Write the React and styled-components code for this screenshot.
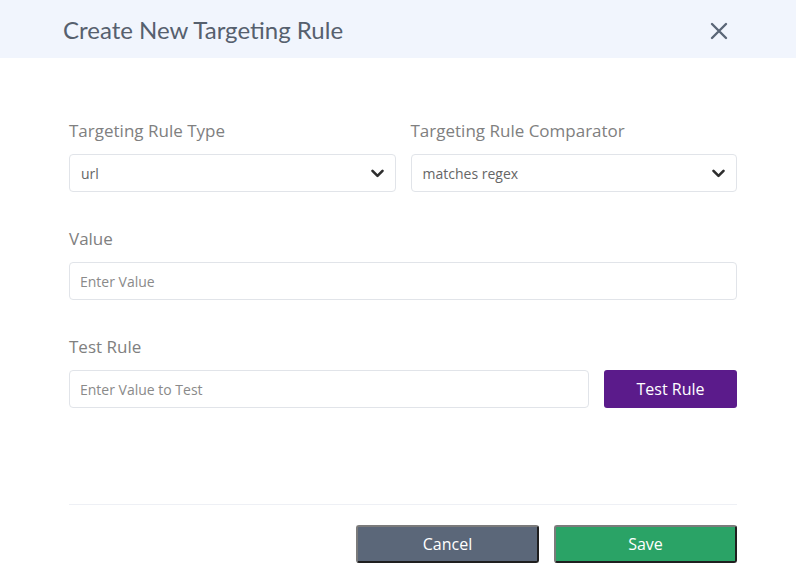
import styled, { createGlobalStyle } from "styled-components";

const GlobalStyle = createGlobalStyle`
  html, body {
    margin: 0;
    padding: 0;
    background: #ffffff;
  }
  * {
    box-sizing: border-box;
  }
`;

const Chevron = () => (
  <svg width="13" height="9" viewBox="0 0 13 9">
    <path
      d="M1.5 1.8 L6.5 6.8 L11.5 1.8"
      fill="none"
      stroke="#2e2e2e"
      strokeWidth="2.6"
      strokeLinecap="round"
      strokeLinejoin="round"
    />
  </svg>
);

const CloseIcon = () => (
  <svg width="20" height="20" viewBox="0 0 20 20">
    <path
      d="M3 3 L17 17 M17 3 L3 17"
      stroke="#5b6677"
      strokeWidth="2.4"
      strokeLinecap="round"
    />
  </svg>
);

const App = () => {
  return (
    <Modal>
      <GlobalStyle />
      <Header>
        <Title>Create New Targeting Rule</Title>
        <CloseButton aria-label="Close">
          <CloseIcon />
        </CloseButton>
      </Header>

      <Body>
        <Row>
          <Field>
            <Label>Targeting Rule Type</Label>
            <SelectBox>
              <span>url</span>
              <Chevron />
            </SelectBox>
          </Field>
          <Field>
            <Label>Targeting Rule Comparator</Label>
            <SelectBox>
              <span>matches regex</span>
              <Chevron />
            </SelectBox>
          </Field>
        </Row>

        <Field>
          <Label>Value</Label>
          <Input placeholder="Enter Value" />
        </Field>

        <Field>
          <Label>Test Rule</Label>
          <TestRow>
            <Input placeholder="Enter Value to Test" />
            <Button $variant="purple">Test Rule</Button>
          </TestRow>
        </Field>
      </Body>

      <Footer>
        <FooterButton $variant="gray">Cancel</FooterButton>
        <FooterButton $variant="green">Save</FooterButton>
      </Footer>
    </Modal>
  );
};

export default App;

const colors = {
  purple: "#5b1b8b",
  gray: "#5b6779",
  green: "#2aa366",
};

const Modal = styled.div`
  width: 796px;
  height: 582px;
  background: #ffffff;
  display: flex;
  flex-direction: column;
`;

const Header = styled.div`
  height: 58px;
  flex-shrink: 0;
  background: #f1f5fd;
  display: flex;
  align-items: center;
  justify-content: space-between;
  padding: 0 67px 0 63px;
`;

const Title = styled.h2`
  margin: 0;
  font-family: Lato, "Open Sans", sans-serif;
  font-weight: 400;
  font-size: 24px;
  color: #56606e;
`;

const CloseButton = styled.button`
  background: transparent;
  border: none;
  padding: 0;
  margin-top: 3px;
  display: flex;
  cursor: pointer;
`;

const Body = styled.div`
  padding: 62px 59px 0 69px;
  display: flex;
  flex-direction: column;
  gap: 36px;
`;

const Row = styled.div`
  display: grid;
  grid-template-columns: 1fr 1fr;
  gap: 15px;
`;

const Field = styled.div`
  display: flex;
  flex-direction: column;
  gap: 12px;
`;

const Label = styled.label`
  font-family: "Open Sans", sans-serif;
  font-size: 17px;
  line-height: 22px;
  color: #808080;
`;

const SelectBox = styled.div`
  height: 38px;
  border: 1px solid #e1e4e9;
  border-radius: 4px;
  display: flex;
  align-items: center;
  justify-content: space-between;
  padding: 0 11px 0 11px;
  font-family: "Open Sans", sans-serif;
  font-size: 14px;
  color: #666;
`;

const Input = styled.input`
  width: 100%;
  height: 38px;
  flex-shrink: 0;
  border: 1px solid #e1e4e9;
  border-radius: 4px;
  padding: 0 10px;
  font-family: "Open Sans", sans-serif;
  font-size: 14px;
  color: #444;
  outline: none;

  &::placeholder {
    color: #8a8a8a;
  }
`;

const TestRow = styled.div`
  display: flex;
  gap: 15px;

  ${Input} {
    flex: 1;
    width: auto;
    min-width: 0;
  }
`;

const Button = styled.button`
  width: 133px;
  height: 38px;
  flex-shrink: 0;
  border: none;
  border-radius: 3px;
  background: ${(p) => colors[p.$variant]};
  color: #ffffff;
  font-family: "Open Sans", sans-serif;
  font-size: 16px;
  cursor: pointer;
`;

const Footer = styled.div`
  margin: 96px 59px 0 69px;
  border-top: 1px solid #eef0f5;
  padding-top: 20px;
  display: flex;
  justify-content: flex-end;
  gap: 15px;
`;

const FooterButton = styled.button`
  width: 183px;
  height: 38px;
  border: 2px solid;
  border-color: #7b7b7b #1f1f1f #1f1f1f #7b7b7b;
  border-radius: 3px;
  background: ${(p) => colors[p.$variant]};
  color: #ffffff;
  font-family: "Open Sans", sans-serif;
  font-size: 16px;
  cursor: pointer;
`;
